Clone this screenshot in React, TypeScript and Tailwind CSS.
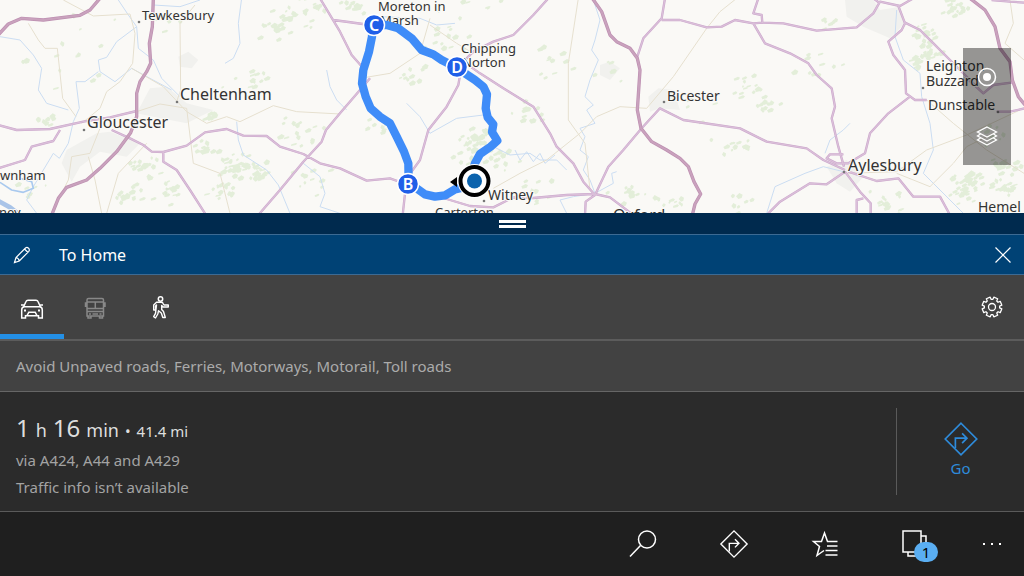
import { useState } from 'react';
import type { ReactNode } from 'react';

interface Label {
  x: number;
  y: number;
  text: string;
  size: number;
}

const LABELS: Label[] = [
  { x: 142, y: 20, text: 'Tewkesbury', size: 13 },
  { x: 180, y: 100, text: 'Cheltenham', size: 16 },
  { x: 87, y: 128, text: 'Gloucester', size: 16 },
  { x: 0, y: 180, text: 'wnham', size: 13 },
  { x: -1, y: 217, text: 'ney', size: 13 },
  { x: 378, y: 11, text: 'Moreton in', size: 13 },
  { x: 380, y: 25, text: 'Marsh', size: 13 },
  { x: 461, y: 53, text: 'Chipping', size: 13 },
  { x: 462, y: 67, text: 'Norton', size: 13 },
  { x: 488, y: 200, text: 'Witney', size: 14 },
  { x: 435, y: 217, text: 'Carterton', size: 13 },
  { x: 613, y: 221, text: 'Oxford', size: 16 },
  { x: 667, y: 101, text: 'Bicester', size: 14 },
  { x: 848, y: 171, text: 'Aylesbury', size: 16 },
  { x: 926, y: 71, text: 'Leighton', size: 14 },
  { x: 926, y: 86, text: 'Buzzard', size: 14 },
  { x: 928, y: 110, text: 'Dunstable', size: 14 },
  { x: 978, y: 212, text: 'Hemel', size: 14 },
];

const TOWNS = [
  [139, 22], [177, 102], [84, 130], [484, 201], [664, 102], [844, 172], [923, 88], [998, 112],
];

// Map geometry is stored at three units per screen pixel
const MOTORWAYS = [
  'M-10 110 L25 72 L65 55 L130 60 L240 46 L270 30 L300 -5',
  'M460 -5 L457 80 L448 130 L452 190 L440 215 L420 245 L410 280 L410 350 L392 398 L350 455 L300 505 L260 540 L200 562 L175 595 L155 645',
  'M1777 -5 L1805 35 L1830 105 L1850 125 L1890 145 L1912 175 L1920 210 L1912 330 L1923 385 L1955 425 L2000 450 L2040 475 L2065 500 L2082 545 L2102 582 L2085 612 L2077 645',
  'M2910 -5 L2955 30 L2985 80 L3000 145 L3030 185 L3037 240 L3055 290 L3075 315',
];

const MAIN_ROADS = [
  'M-5 375 L50 390 L150 387 L250 365 L330 352 L410 333',
  'M-5 505 L75 480 L95 440 L160 423 L180 390',
  'M335 390 L390 415 L430 435 L455 455 L490 456 L560 437 L615 397 L680 387 L730 407 L800 408 L840 440 L910 462 L960 490 L1020 505 L1100 542 L1170 535 L1225 555 L1290 582 L1410 618 L1480 622 L1540 592 L1600 594 L1700 585 L1785 582 L1830 592 L1900 645',
  'M490 456 L490 485 L530 510 L570 570 L618 645',
  'M775 645 L840 570 L910 485 L965 425 L978 390 L1020 340 L1080 270 L1110 235',
  'M960 -5 L1020 95 L1055 165 L1090 205',
  'M1000 60 L1045 66 L1110 75',
  'M1208 645 L1220 535 L1260 480 L1285 390 L1340 320 L1375 255 L1382 215',
  'M1645 -5 L1600 45 L1540 105 L1480 125 L1420 155 L1390 185 L1440 220 L1510 265 L1600 320 L1650 400 L1670 440 L1720 490 L1750 545 L1785 585',
  'M1995 -5 L1985 55 L1930 115 L1912 170',
  'M1785 585 L1825 500 L1870 450 L1925 385 L1980 325 L2050 360 L2220 385 L2300 425 L2420 445 L2470 480 L2535 510',
  'M1985 60 L2040 60 L2120 82 L2165 80 L2205 60 L2260 70 L2295 130 L2370 160 L2425 190 L2450 225 L2495 265 L2505 320 L2495 355 L2515 440 L2532 500',
  'M2275 -5 L2260 40 L2285 45 L2287 68 L2260 70 M2287 68 L2350 70 L2450 92 L2570 82 L2620 40 L2640 5 L2700 18 L2740 -5',
  'M2640 10 L2620 -5',
  'M2695 18 L2715 70 L2705 90 L2665 125 L2680 165 L2715 210 L2718 280 L2745 300 L2780 300',
  'M2715 68 L2760 90 L2795 125 L2850 180 L2895 225 L2950 280',
  'M2730 290 L2665 340 L2610 400 L2595 460 L2545 490 L2510 490 L2480 475 L2490 463 L2530 463',
  'M2535 515 L2480 553 L2430 550 L2340 605 L2300 645',
  'M2535 515 L2580 575 L2612 610 L2612 645',
  'M2570 645 L2570 600 L2590 595',
  'M2545 515 L2630 543 L2695 535 L2740 590 L2820 590 L2850 645',
  'M2895 230 L2950 280 L2980 255 L3040 247',
  'M2990 335 L3030 335 L3075 325',
  'M1785 585 L1757 605 L1755 645',
  'M2975 0 L3030 5 L3075 8',
];

const MINOR_ROADS = [
  'M190 0 L280 48 L390 42 L405 100 L398 190 L360 245 L320 275 L300 325 L245 370',
  'M85 70 L115 120 L135 145 L172 145 L188 295 L228 350',
  'M585 15 L540 70 L542 270 L530 305',
  'M395 205 L490 260 L560 335 L620 370 L680 350 L720 365 L820 317 L890 335 L1020 342',
  'M410 335 L480 312 L560 325 L580 490 L660 520 L690 640',
  'M300 385 L270 460 L215 470 L205 540 L170 610',
  'M440 430 L355 520 L320 640',
  'M265 470 L285 540 L305 640',
  'M1080 235 L1170 220 L1260 160 L1290 55',
  'M1290 75 L1370 130 L1420 160',
  'M1480 565 L1560 520 L1640 480 L1740 400 L1790 350 L1860 320 L1940 325 L2020 230 L2120 85',
  'M1735 -5 L1705 190 L1705 360 L1755 430 L1770 570',
  'M2540 520 L2690 515 L2780 450 L2900 405 L3060 330',
  'M2780 300 L2860 370 L2960 450 L3072 520',
  'M2690 520 L2790 560 L2860 490 L2900 440 L2980 400',
  'M2210 -5 L2160 35 L2120 85',
  'M3030 0 L3040 70 L3015 130 L3072 180',
];

const RIVERS = [
  'M355 0 L385 45 L410 80 L350 125 L320 172 L295 180 L300 215 L345 245 L395 205 L450 235 L515 270',
  'M410 80 L415 145 L460 180 L485 235 L540 290',
  'M295 215 L255 245 L228 245 L238 325 L220 365 L205 430 L178 475 L160 460 L100 560 L80 600 L110 640',
  'M0 110 L60 120 L100 165 L125 205 L115 270 L140 310 L205 330',
  'M725 -5 L715 70 L720 130 L700 175 L675 190',
  'M460 15 L540 20 L600 0',
  'M980 210 L990 260 L1010 300 L1040 330',
  'M710 365 L715 420 L730 465 L800 510 L835 555 L870 640',
  'M910 490 L960 530 L975 580 L960 620 L1020 640',
  'M1140 50 L1260 55 L1310 75 L1365 70',
  'M1220 310 L1260 350 L1290 400 L1370 355 L1450 345',
  'M1480 440 L1530 465 L1590 460 L1620 480 L1670 480 L1700 510',
  'M1545 450 L1560 480 L1580 455 L1600 485 L1620 460 L1635 490 L1665 465',
  'M1700 640 L1680 600 L1720 590 L1785 580 L1770 540 L1750 510 L1765 470 L1740 450 L1755 410 L1740 385 L1785 370 L1760 330 L1780 315 L1755 290 L1770 240 L1795 180 L1775 150 L1785 120 L1800 60 L1780 0',
  'M1785 580 L1840 550 L1835 520 L1850 515',
  'M2475 460 L2490 420 L2530 390 L2550 370',
  'M2300 640 L2325 560 L2415 520 L2470 500 L2530 515',
  'M2690 30 L2685 110 L2710 180 L2760 220 L2765 290 L2790 370 L2800 450 L2770 520 L2850 600 L2890 640',
];

// Woodland clusters: centre, radius and number of patches
const WOODS = [
  [72, 180, 14, 6], [130, 360, 26, 10], [490, 60, 50, 4], [740, 230, 90, 14], [820, 90, 60, 14],
  [880, 45, 90, 20], [940, 20, 50, 10], [620, 355, 25, 10], [430, 500, 55, 22], [370, 590, 60, 18],
  [500, 580, 60, 14], [610, 450, 45, 14], [700, 500, 60, 30], [770, 510, 50, 22], [660, 570, 50, 18],
  [890, 400, 90, 16], [930, 540, 70, 12], [1060, 20, 60, 12], [1230, 225, 50, 10], [1140, 380, 60, 8],
  [1415, 410, 45, 36], [1390, 480, 60, 16], [1500, 480, 60, 14], [1580, 330, 60, 12], [1600, 570, 60, 10],
  [1320, 120, 100, 14], [1640, 180, 90, 12], [1830, 210, 60, 6], [1880, 570, 70, 14], [2000, 610, 50, 12],
  [2240, 260, 55, 14], [2300, 310, 35, 12], [2190, 430, 70, 14], [2480, 70, 30, 6], [2210, 620, 60, 8],
  [2770, 100, 40, 24], [2780, 160, 40, 24], [2740, 190, 30, 12], [2850, 30, 50, 20], [2900, 540, 55, 34],
  [2890, 580, 50, 22], [3000, 500, 60, 18], [2980, 410, 50, 12], [2650, 610, 70, 16], [3010, 570, 50, 18],
  [1460, 20, 200, 14], [2060, 300, 120, 8], [2480, 200, 200, 10], [240, 160, 180, 12], [100, 560, 60, 6],
];

const WOOD_PATHS = WOODS.map(([cx, cy, radius, count], i) => {
  let seed = i * 7919 + 17;
  const rand = () => {
    seed = (seed * 16807 + 11) % 2147483647;
    return seed / 2147483647;
  };
  rand();
  let d = '';
  for (let n = 0; n < count; n++) {
    const angle = rand() * 6.28;
    const dist = rand() * radius;
    const x = Math.round(cx + Math.cos(angle) * dist);
    const y = Math.round(cy + Math.sin(angle) * dist * 0.7);
    const w = Math.round(3 + rand() * 11);
    const h = Math.round(3 + rand() * 7);
    d += `M${x} ${y}l${w} ${-h}l${h} ${Math.round(h / 2)}l${-Math.round(w / 3)} ${h}l${-w} 3z`;
  }
  return d;
});

const ROUTE =
  'M1117 75 L1116 110 L1107 155 L1090 210 L1086 250 L1097 290 L1112 325 L1140 350 L1170 370 L1190 410 L1212 455 L1225 490 L1226 550 L1250 565 L1275 583 L1305 590 L1335 586 L1365 568 L1400 560 L1425 490 L1440 462 L1472 440 L1492 422 L1476 396 L1480 373 L1463 352 L1457 325 L1461 283 L1450 260 L1425 240 L1365 200 L1325 180 L1300 163 L1265 150 L1235 115 L1195 85 L1160 75 L1117 75';

const MARKERS = [
  { id: 'C', x: 374, y: 25 },
  { id: 'D', x: 457, y: 67 },
  { id: 'B', x: 408, y: 184 },
];

function Roads({ paths, outer, inner, wide }: { paths: string[]; outer: string; inner: string; wide?: boolean }) {
  return (
    <g fill="none" strokeLinejoin="round">
      <path d={paths.join(' ')} stroke={outer} strokeWidth={wide ? 10 : 7} />
      <path d={paths.join(' ')} stroke={inner} strokeWidth={wide ? 6 : 4} />
    </g>
  );
}

function RouteMap() {
  return (
    <svg
      className="block h-full w-full bg-[#faf9f6] font-['Noto_Sans',sans-serif]"
      viewBox="0 0 1024 213"
      preserveAspectRatio="xMidYMid slice"
      role="img"
      aria-label="Route map"
    >
      <g transform="scale(0.333333)">
        <g fill="#f1f1ee">
          <path d="M200 450 L290 400 L330 395 L420 430 L380 470 L300 455 L240 500 L215 545 L185 490Z" />
          <path d="M410 340 L450 265 L500 260 L560 310 L640 330 L560 370 L460 350Z" />
          <path d="M535 170 L565 155 L595 180 L575 205 L540 200Z" />
          <path d="M1800 195 L1830 185 L1860 205 L1830 240 L1800 225Z" />
          <path d="M1945 290 L1975 265 L2020 270 L2040 330 L1980 325 L1950 335Z" />
          <path d="M2535 0 L2620 0 L2640 30 L2700 20 L2715 70 L2670 115 L2590 80 L2540 50Z" />
          <path d="M2480 500 L2540 480 L2590 530 L2550 575 L2510 550Z" />
        </g>
        <g fill="#e3eed9">
          {WOOD_PATHS.map((d, i) => <path key={i} d={d} />)}
        </g>
        <g fill="none" strokeLinejoin="round">
          <path d={RIVERS.join(' ')} stroke="#cbddf2" strokeWidth="3" />
          <path d="M0 547 L35 570 L70 577 L100 565 L95 545 L60 535" stroke="#a9c9ee" strokeWidth="5" />
          <path d="M-10 600 L30 622 L60 645" stroke="#a9c4e8" strokeWidth="14" />
          <path d={MINOR_ROADS.join(' ')} stroke="#e6e0cf" strokeWidth="3" />
        </g>
        <Roads paths={MAIN_ROADS} outer="#cba6cb" inner="#dabfd9" />
        <Roads paths={MOTORWAYS} outer="#bd8fb1" inner="#c9a2bd" wide />
      </g>

      <g fill="#777">
        {TOWNS.map(([x, y]) => <circle key={x} cx={x} cy={y} r="1.3" />)}
      </g>
      <g fill="#333" stroke="#faf9f6" strokeWidth="2" strokeLinejoin="round" paintOrder="stroke">
        {LABELS.map(l => (
          <text key={l.text} x={l.x} y={l.y} fontSize={l.size}>{l.text}</text>
        ))}
      </g>

      <path d={ROUTE} transform="scale(0.333333)" fill="none" stroke="#3f8cf8" strokeWidth="25" strokeLinejoin="round" />
      {MARKERS.map(m => (
        <g key={m.id}>
          <circle cx={m.x} cy={m.y} r="10.5" fill="#205fe8" stroke="#fff" strokeWidth="1.5" />
          <text x={m.x} y={m.y + 6} fontSize="16" fontWeight="600" fill="#fff" textAnchor="middle">{m.id}</text>
        </g>
      ))}
      <path d="M450 182 L457 177 V187Z" fill="#000" />
      <circle cx="474.500" cy="181" r="17" fill="#fff" />
      <circle cx="474.500" cy="181" r="14" fill="#fff" stroke="#000" strokeWidth="4" />
      <circle cx="474.500" cy="181" r="7.500" fill="#0c63ad" />
    </svg>
  );
}

function Icon({ children, className }: { children: ReactNode; className: string }) {
  return (
    <svg className={className} fill="none" stroke="currentColor" strokeWidth="1.5" viewBox="0 0 32 32" aria-hidden="true">
      {children}
    </svg>
  );
}

function Directions({ className }: { className: string }) {
  return (
    <Icon className={className}>
      <path d="M16 2 L30 16 L16 30 L2 16Z" />
      <path d="M11 24 V15.300 H21 M17 11 L21.300 15.300 L17 19.600" />
    </Icon>
  );
}

// Eight teeth, each one an outer edge followed by a valley
const GEAR_PATH = Array.from({ length: 8 }, (_, i) => {
  const base = (i * Math.PI) / 4 + Math.PI / 8;
  return [[-0.21, 10], [0.21, 10], [0.27, 7.7], [0.51, 7.7]]
    .map(([a, r]) => `${(11 + Math.cos(base + a) * r).toFixed(2)} ${(11 + Math.sin(base + a) * r).toFixed(2)}`)
    .join(' L');
}).join(' L');

const MODES = [
  {
    id: 'Drive',
    icon: (
      <Icon className="size-8">
        <path d="M7.500 14 L10 8.500 Q10.500 7.300 12 7.300 H20 Q21.500 7.300 22 8.500 L24.500 14 M5 12 H8 M24 12 H27 M8.500 13.700 H23.500 Q26.300 13.700 26.300 17 V25 H22.500 V22.700 H9.500 V25 H5.700 V17 Q5.700 13.700 8.500 13.700Z" />
        <path d="M11 22.500 L12.800 19.300 H19.200 L21 22.500" />
        <path d="M8 17.500 H10 M22 17.500 H24" strokeWidth="2" />
      </Icon>
    ),
  },
  {
    id: 'Transit',
    icon: (
      <Icon className="size-8">
        <path d="M7 23 V7 Q7 5.500 8.500 5.500 H22 Q23.500 5.500 23.500 7 V23Z M7 9 H23.500 M7 15.500 H23.500 M15.300 9 V15.500 M7 18.500 H23.500 M5.500 14 V10 H7 M25 14 V10 H23.500 M8 23 V25 H11 V23 M19.500 23 V25 H22.500 V23" />
        <path d="M9 21 H11 M12.500 21 H18 M19.500 21 H21.500" />
      </Icon>
    ),
  },
  {
    id: 'Walk',
    icon: (
      <Icon className="size-8">
        <circle cx="16.500" cy="6" r="2.200" />
        <path
          d="M12.500 9.300 H17.500 Q18.500 9.300 19 10.300 L20 12 H24.300 V14 H19 L17.700 12.500 V16.500 L19.500 18.500 L21.300 24.500 H18.800 L17.300 20 L14.500 17.800 L13.800 21 L11.500 25 L9.700 23.700 L11.500 20.300 L12.500 12 L11.600 13 V17 H9.700 V12Z"
          strokeLinejoin="round"
          strokeWidth="1.400"
        />
      </Icon>
    ),
  },
];

const COMMANDS = [
  {
    id: 'Search',
    icon: (
      <Icon className="size-8">
        <circle cx="20" cy="11.500" r="8.500" />
        <path d="M13.500 17.500 L3 28.500" />
      </Icon>
    ),
  },
  { id: 'Directions', icon: <Directions className="size-[30px]" /> },
  {
    id: 'Favourites',
    icon: (
      <Icon className="size-8">
        <path d="M28.500 13.500 H18.500 L15.500 5 L12.500 13.500 H4.500 L10.500 18.500 L8 27.500 L15 22.500" />
        <path d="M18 18 H28.500 M16.500 22.500 H28.500 M16.500 27 H28.500" />
      </Icon>
    ),
  },
];

export default function App() {
  const [mode, setMode] = useState('Drive');

  return (
    <div className="flex h-screen flex-col overflow-hidden bg-[#2b2b2b] font-['Noto_Sans','Open_Sans',sans-serif] text-white">
      <main className="relative min-h-0 flex-1 overflow-hidden">
        <RouteMap />
        <div className="absolute top-12 right-[13px] flex w-12 flex-col bg-black/40">
          <button type="button" aria-label="Show my location" className="flex h-[58px] items-center justify-center">
            <svg viewBox="0 0 20 20" className="size-5" aria-hidden="true">
              <circle cx="10" cy="10" r="8.500" fill="none" stroke="currentColor" strokeWidth="1.500" />
              <circle cx="10" cy="10" r="4" fill="currentColor" />
            </svg>
          </button>
          <button type="button" aria-label="Map views" className="flex h-[59px] items-center justify-center">
            <svg viewBox="0 0 22 20" className="h-5 w-[22px]" fill="none" stroke="currentColor" strokeWidth="1.300" aria-hidden="true">
              <path d="M11 1 L20.500 6 L11 11 L1.500 6Z" />
              <path d="M4.500 8 L1.500 10 L11 15 L20.500 10 L17.500 8 M4.500 12 L1.500 14 L11 19 L20.500 14 L17.500 12" />
            </svg>
          </button>
        </div>
      </main>

      <button type="button" aria-label="Resize panel" className="flex h-[21px] shrink-0 flex-col items-center justify-center gap-0.5 bg-[#002a4e]">
        <span className="h-[3px] w-[27px] bg-white" />
        <span className="h-[3px] w-[27px] bg-white" />
      </button>

      <header className="flex h-[41px] shrink-0 items-center border-y border-[#3c6a93] bg-[#004275]">
        <button type="button" aria-label="Edit route" className="flex h-full w-[43px] items-center justify-center">
          <svg viewBox="0 0 18 18" className="size-[18px]" fill="none" stroke="currentColor" strokeWidth="1.200" aria-hidden="true">
            <path d="M1.500 16.500 L3 11.500 L12.500 2 Q14 .8 15.500 2.200 Q17 3.800 15.800 5.300 L6.300 15Z M11.500 3 L15 6.500 M3 11.500 Q5.800 12.200 6.300 15" />
          </svg>
        </button>
        <h1 className="flex-1 pl-4 text-base">To Home</h1>
        <button type="button" aria-label="Close" className="flex h-full w-[43px] items-center justify-center">
          <svg viewBox="0 0 16 16" className="size-4" stroke="currentColor" strokeWidth="1.200" aria-hidden="true">
            <path d="M.5 .5 L15.500 15.500 M15.500 .5 L.5 15.500" />
          </svg>
        </button>
      </header>

      <nav className="flex h-[66px] shrink-0 border-b-2 border-[#5c5c5c] bg-[#424242]" aria-label="Travel mode">
        {MODES.map(m => (
          <button
            key={m.id}
            type="button"
            aria-label={m.id}
            aria-pressed={m.id === mode}
            onClick={() => setMode(m.id)}
            className={`flex w-16 items-center justify-center border-b-[5px] pt-2 ${m.id === mode ? 'border-[#2490e6]' : 'border-transparent'} ${m.id === 'Transit' ? 'text-[#888]' : ''}`}
          >
            {m.icon}
          </button>
        ))}
        <button type="button" aria-label="Route options" className="ml-auto flex w-16 items-center justify-center">
          <svg viewBox="0 0 22 22" className="size-[22px]" fill="none" stroke="currentColor" strokeWidth="1.300" strokeLinejoin="round" aria-hidden="true">
            <circle cx="11" cy="11" r="3.500" />
            <path d={`M${GEAR_PATH}Z`} />
          </svg>
        </button>
      </nav>

      <p className="flex h-[51px] shrink-0 items-center border-b border-[#666] bg-[#424242] px-4 text-[15px] text-[#ababab]">
        Avoid Unpaved roads, Ferries, Motorways, Motorail, Toll roads
      </p>

      <section className="flex h-[119px] shrink-0 py-4" aria-label="Suggested route">
        <div className="flex-1 px-4 text-[#a3a3a3]">
          <p className="flex h-[39px] items-baseline gap-1.5 text-[#dedede]">
            <span className="text-2xl leading-10">1</span>
            <span className="text-lg">h</span>
            <span className="text-2xl">16</span>
            <span className="text-lg">min</span>
            <span className="text-[15px]">•</span>
            <span className="text-[15px]">41.4 mi</span>
          </p>
          <p className="text-[15px] leading-[27px]">via A424, A44 and A429</p>
          <p className="text-[15px] leading-[27px]">Traffic info isn’t available</p>
        </div>
        <button type="button" className="flex w-32 flex-col items-center justify-center border-l border-[#5a5a5a] pb-1 text-[15px] leading-[22px] text-[#2e8bdb]">
          <Directions className="size-9" />
          Go
        </button>
      </section>

      <footer className="flex h-[65px] shrink-0 items-center justify-end border-t border-[#5a5a5a] bg-[#1f1f1f]">
        {COMMANDS.map(c => (
          <button key={c.id} type="button" aria-label={c.id} className="flex h-full w-[91px] items-center justify-center">
            {c.icon}
          </button>
        ))}
        <button type="button" aria-label="Open tabs" className="relative flex h-full w-[90px] items-center justify-center">
          <Icon className="size-8">
            <path d="M4 3 H22 V24 H4Z M22 8 H27 V28 H9 V24" />
          </Icon>
          <span className="absolute top-[30px] left-11 flex h-5 w-6 items-center justify-center rounded-full bg-[#5aaef2] text-[15px] text-black">
            1
          </span>
        </button>
        <button type="button" aria-label="More" className="flex h-full w-16 items-center justify-center gap-1.5">
          <span className="size-0.5 bg-white" />
          <span className="size-0.5 bg-white" />
          <span className="size-0.5 bg-white" />
        </button>
      </footer>
    </div>
  );
}
